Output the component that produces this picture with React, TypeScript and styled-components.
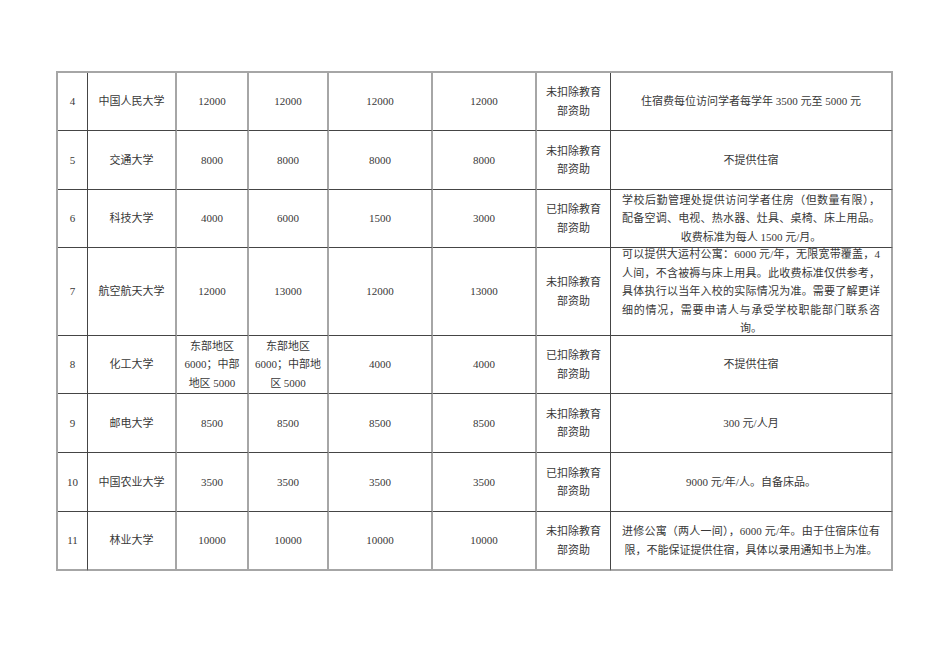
import React from 'react'
import styled, { createGlobalStyle } from 'styled-components'

const GlobalStyle = createGlobalStyle`
    html, body {
        margin: 0;
        padding: 0;
        background: #ffffff;
    }
    body {
        font-family: "Liberation Serif", "Noto Sans CJK SC", serif;
        color: #383838;
    }
`

const DARK = '1px solid #454545'
const GRAY = '2px solid #a6a6a6'

const COLS = [30, 89, 72, 80, 104, 104, 74, 282]
const COL_EDGE: ('dark' | 'gray')[] = ['dark', 'gray', 'gray', 'gray', 'gray', 'gray', 'dark', 'gray']

const Page = styled.div`
    width: 950px;
    height: 672px;
    padding: 71px 0 0 56px;
    box-sizing: border-box;
`

const Table = styled.div`
    display: flex;
    flex-direction: column;
    width: max-content;
    border-left: ${GRAY};
    border-top: ${GRAY};
`

const Row = styled.div<{ $h: number }>`
    display: grid;
    grid-template-columns: ${COLS.map(w => `${w}px`).join(' ')};
    grid-template-rows: minmax(0, 1fr);
    height: ${({ $h }) => $h}px;
`

const Cell = styled.div<{ $edge: 'dark' | 'gray'; $last: boolean; $wide: boolean }>`
    box-sizing: border-box;
    display: flex;
    flex-direction: column;
    justify-content: center;
    align-items: stretch;
    overflow: visible;
    min-width: 0;
    min-height: 0;
    padding: 0 ${({ $wide }) => ($wide ? '11px' : '2px')};
    border-right: ${({ $edge }) => ($edge === 'dark' ? DARK : GRAY)};
    border-bottom: ${({ $last }) => ($last ? GRAY : DARK)};
    font-size: 11px;
    line-height: 18.5px;
    text-align: center;
`

const Line = styled.div<{ $fill: boolean }>`
    white-space: nowrap;
    text-align: ${({ $fill }) => ($fill ? 'justify' : 'center')};
    text-align-last: ${({ $fill }) => ($fill ? 'justify' : 'center')};
    text-justify: inter-character;
`

type Content = string | string[]

interface RowData {
    h: number
    cells: Content[]
}

const NOT_DEDUCTED = ['未扣除教育', '部资助']
const DEDUCTED = ['已扣除教育', '部资助']

const ROWS: RowData[] = [
    {
        h: 58,
        cells: ['4', '中国人民大学', '12000', '12000', '12000', '12000', NOT_DEDUCTED,
            '住宿费每位访问学者每学年 3500 元至 5000 元'],
    },
    {
        h: 59,
        cells: ['5', '交通大学', '8000', '8000', '8000', '8000', NOT_DEDUCTED, '不提供住宿'],
    },
    {
        h: 58,
        cells: ['6', '科技大学', '4000', '6000', '1500', '3000', DEDUCTED, [
            '学校后勤管理处提供访问学者住房（但数量有限），',
            '配备空调、电视、热水器、灶具、桌椅、床上用品。',
            '收费标准为每人 1500 元/月。',
        ]],
    },
    {
        h: 88,
        cells: ['7', '航空航天大学', '12000', '13000', '12000', '13000', NOT_DEDUCTED, [
            '可以提供大运村公寓：6000 元/年，无限宽带覆盖，4',
            '人间，不含被褥与床上用具。此收费标准仅供参考，',
            '具体执行以当年入校的实际情况为准。需要了解更详',
            '细的情况，需要申请人与承受学校职能部门联系咨',
            '询。',
        ]],
    },
    {
        h: 58,
        cells: ['8', '化工大学',
            ['东部地区', '6000；中部', '地区 5000'],
            ['东部地区', '6000；中部地', '区 5000'],
            '4000', '4000', DEDUCTED, '不提供住宿'],
    },
    {
        h: 59,
        cells: ['9', '邮电大学', '8500', '8500', '8500', '8500', NOT_DEDUCTED, '300 元/人月'],
    },
    {
        h: 59,
        cells: ['10', '中国农业大学', '3500', '3500', '3500', '3500', DEDUCTED, '9000 元/年/人。自备床品。'],
    },
    {
        h: 59,
        cells: ['11', '林业大学', '10000', '10000', '10000', '10000', NOT_DEDUCTED, [
            '进修公寓（两人一间），6000 元/年。由于住宿床位有',
            '限，不能保证提供住宿，具体以录用通知书上为准。',
        ]],
    },
]

const CellText: React.FC<{ content: Content; justify: boolean }> = ({ content, justify }) => {
    const lines = Array.isArray(content) ? content : [content]
    return (
        <>
            {lines.map((line, i) => (
                <Line key={i} $fill={justify && lines.length > 1 && i < lines.length - 1}>
                    {line}
                </Line>
            ))}
        </>
    )
}

export default function App() {
    return (
        <>
            <GlobalStyle />
            <Page>
                <Table>
                    {ROWS.map((row, r) => (
                        <Row key={r} $h={row.h}>
                            {row.cells.map((content, c) => (
                                <Cell
                                    key={c}
                                    $edge={COL_EDGE[c]}
                                    $last={r === ROWS.length - 1}
                                    $wide={c === COLS.length - 1}
                                >
                                    <CellText content={content} justify={c === COLS.length - 1} />
                                </Cell>
                            ))}
                        </Row>
                    ))}
                </Table>
            </Page>
        </>
    )
}
